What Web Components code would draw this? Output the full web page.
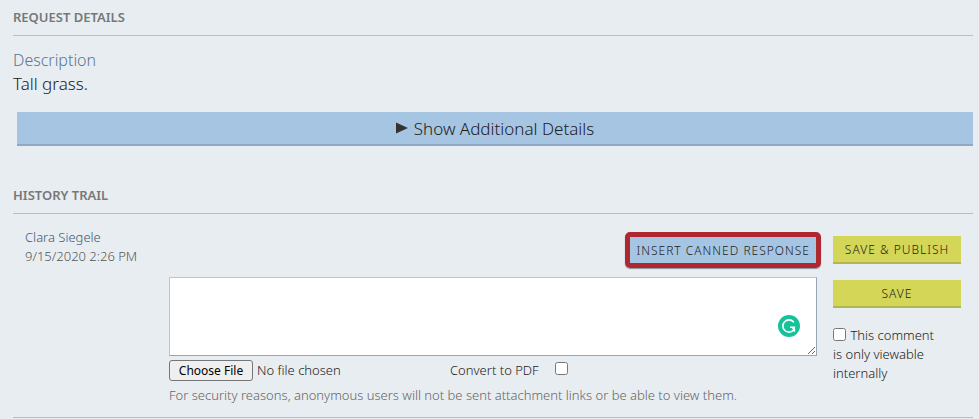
<!DOCTYPE html>
<html lang="en">
<head>
<meta charset="utf-8">
<meta name="viewport" content="width=device-width, initial-scale=1">
<title>Request Details</title>
<style>
  body {
    margin: 0;
    background: #e8edf1;
    color: #222;
    font: 300 13px/19px "Noto Sans", "Open Sans", sans-serif;
  }
</style>
</head>
<body>

<template id="sectionTemplate">
  <style>
    :host {
      display: block;
    }
    h2 {
      margin: 0;
      padding: 8px 0 9px;
      border-bottom: 1px solid #afc0cf;
      color: #777;
      font-size: 13px;
      line-height: 18px;
      font-weight: 600;
      text-transform: uppercase;
    }
  </style>
  <h2><slot name="title"></slot></h2>
  <slot></slot>
</template>

<template id="fieldTemplate">
  <style>
    :host {
      display: block;
      padding: 12px 0 16px;
      font-size: 17px;
      line-height: 24px;
    }
    .label {
      color: #5a7594;
      font-size: 16px;
    }
  </style>
  <div class="label"><slot name="label"></slot></div>
  <div><slot></slot></div>
</template>

<template id="buttonTemplate">
  <style>
    :host {
      display: block;
    }
    button {
      display: block;
      box-sizing: border-box;
      width: 100%;
      height: 28px;
      margin: 0;
      padding: 0 6px;
      border: 0;
      border-bottom: 2px solid #b1b552;
      border-radius: 0;
      background: #d4d657;
      color: #222;
      font: inherit;
      font-size: 12px;
      letter-spacing: 1px;
      text-transform: uppercase;
      white-space: nowrap;
      cursor: pointer;
    }
    :host([kind="info"]) button {
      height: 26px;
      background: #a6c5e3;
      border-bottom: 0;
    }
    :host([kind="bar"]) button {
      display: flex;
      align-items: center;
      justify-content: center;
      gap: 6px;
      height: 34px;
      background: #a6c5e3;
      border-bottom-color: #8fa8c5;
      font-size: 17px;
      letter-spacing: normal;
      text-transform: none;
    }
    :host([highlight]) {
      border: 5px solid #af272f;
      border-radius: 5px;
      box-shadow: 0 1px 1px #8c9299;
    }
  </style>
  <button type="button"><slot></slot></button>
</template>

<template id="editorTemplate">
  <style>
    :host {
      display: block;
      position: relative;
    }
    textarea {
      display: block;
      box-sizing: border-box;
      width: 100%;
      height: 79px;
      margin: 0;
      padding: 6px;
      border: 1px solid;
      border-color: #b7c6d3 #95a5b5 #95a5b5 #b7c6d3;
      border-radius: 0;
      background: #fff;
      color: #222;
      font: inherit;
      resize: both;
    }
    svg {
      position: absolute;
      right: 17px;
      bottom: 19px;
    }
  </style>
  <textarea aria-label="Comment"></textarea>
  <svg width="22" height="22" viewBox="0 0 22 22" aria-hidden="true">
    <circle cx="11" cy="11" r="11" fill="#15c39a"/>
    <path d="M15.4 6.8A6.1 6.1 0 1 0 15.6 15" fill="none" stroke="#fff" stroke-width="1.6" stroke-linecap="round"/>
    <path d="M12 12.2H16.4V16.8" fill="none" stroke="#fff" stroke-width="1.5"/>
    <path d="M13 12.2h3.4v3.6z" fill="#fff"/>
  </svg>
</template>

<template id="attachmentTemplate">
  <style>
    :host {
      display: block;
    }
    .row {
      display: grid;
      grid-template-columns: 281px auto;
      justify-content: start;
      align-items: center;
      padding: 4px 0;
    }
    input[type="file"] {
      width: 240px;
      height: 21px;
      color: #222;
      font: inherit;
    }
    input::file-selector-button {
      box-sizing: border-box;
      width: 84px;
      height: 21px;
      margin: 0 4px 0 0;
      padding: 0 6px;
      border: 1px solid #767676;
      border-radius: 3px;
      background: #efefef;
      color: #000;
      font: 400 12px/19px "Noto Sans", "Open Sans", sans-serif;
    }
    .convert {
      display: flex;
      align-items: center;
      gap: 16px;
    }
    .convert input {
      width: 13px;
      height: 13px;
      margin: 0 0 4px;
    }
    p {
      margin: 0;
      padding: 1px 0 12px;
      color: #666;
    }
  </style>
  <div class="row">
    <input type="file" aria-label="Attachment">
    <label class="convert">Convert to PDF <input type="checkbox"></label>
  </div>
  <p><slot></slot></p>
</template>

<template id="entryTemplate">
  <style>
    :host {
      display: grid;
      grid-template-columns: 128px minmax(0, 1fr) 128px;
      column-gap: 16px;
      padding: 14px 12px 0;
      border-bottom: 1px solid #afc0cf;
    }
    .who {
      color: #3f5878;
    }
    .when {
      color: #555;
    }
    .meta {
      white-space: nowrap;
    }
    .main {
      padding-top: 4px;
    }
    .tools {
      display: flex;
      justify-content: flex-end;
      margin-right: -4px;
      padding-bottom: 9px;
    }
    .side {
      display: flex;
      flex-direction: column;
      gap: 16px;
      padding-top: 8px;
    }
  </style>
  <div class="meta">
    <div class="who"><slot name="who"></slot></div>
    <div class="when"><slot name="when"></slot></div>
  </div>
  <div class="main">
    <div class="tools"><slot name="tools"></slot></div>
    <slot></slot>
  </div>
  <div class="side"><slot name="side"></slot></div>
</template>

<template id="checkTemplate">
  <style>
    :host {
      display: block;
      padding: 2px 20px 0 0;
    }
    input {
      width: 13px;
      height: 13px;
      margin: 0 1px 0 0;
      vertical-align: -1px;
    }
  </style>
  <label><input type="checkbox"> <slot></slot></label>
</template>

<style>
  main {
    display: block;
    padding: 0 6px 0 13px;
  }
  request-button[kind="bar"] {
    margin: 0 0 32px 4px;
  }
</style>

<main>
  <request-section>
    <span slot="title">Request Details</span>
    <request-field><span slot="label">Description</span>Tall grass.</request-field>
    <request-button kind="bar"><svg width="12" height="12" viewBox="0 0 12 12" aria-hidden="true"><path d="M0 0.5L12 6L0 11.5Z" fill="#333"/></svg>Show Additional Details</request-button>
  </request-section>

  <request-section>
    <span slot="title">History Trail</span>
    <history-entry>
      <span slot="who">Clara Siegele</span>
      <span slot="when">9/15/2020 2:26 PM</span>
      <request-button slot="tools" kind="info" highlight>Insert Canned Response</request-button>
      <comment-editor></comment-editor>
      <file-attachment>For security reasons, anonymous users will not be sent attachment links or be able to view them.</file-attachment>
      <request-button slot="side">Save &amp; Publish</request-button>
      <request-button slot="side">Save</request-button>
      <check-option slot="side">This comment is only viewable internally</check-option>
    </history-entry>
  </request-section>
</main>

<script>
  (() => {
    const define = (name, templateId) => {
      const template = document.getElementById(templateId);
      customElements.define(name, class extends HTMLElement {
        constructor() {
          super();
          this.root = this.attachShadow({mode: 'open'});
          this.root.appendChild(template.content.cloneNode(true));
        }
      });
    };

    define("request-section", "sectionTemplate");
    define("request-field", "fieldTemplate");
    define("request-button", "buttonTemplate");
    define("comment-editor", "editorTemplate");
    define("file-attachment", "attachmentTemplate");
    define("history-entry", "entryTemplate");
    define("check-option", "checkTemplate");
  })();
</script>
</body>
</html>
